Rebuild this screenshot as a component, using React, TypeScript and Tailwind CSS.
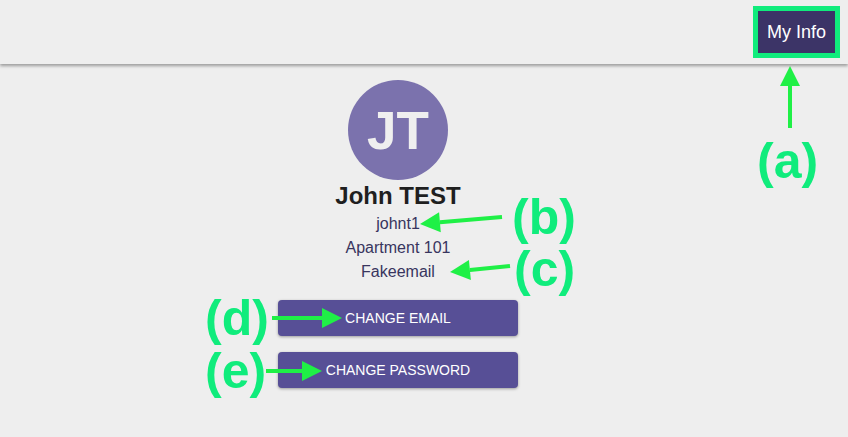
import { ReactNode } from "react";

const ARROW = "#1ff046";

const Label = ({ text, className }: { text: string; className: string }) => (
  <span className={`absolute z-20 text-[50px] font-bold leading-none text-[#10ec7c] ${className}`}>
    {text}
  </span>
);

// arrow drawn from (x1,y1) to head at (x2,y2)
const Arrow = ({ x1, y1, x2, y2 }: { x1: number; y1: number; x2: number; y2: number }) => {
  const a = Math.atan2(y2 - y1, x2 - x1);
  const len = 20;
  const w = 10;
  const bx = x2 - Math.cos(a) * len;
  const by = y2 - Math.sin(a) * len;
  const px = -Math.sin(a) * w;
  const py = Math.cos(a) * w;
  return (
    <g>
      <line x1={x1} y1={y1} x2={bx} y2={by} stroke={ARROW} strokeWidth={4} />
      <polygon points={`${x2},${y2} ${bx + px},${by + py} ${bx - px},${by - py}`} fill={ARROW} />
    </g>
  );
};

const ActionButton = ({ children }: { children: ReactNode }) => (
  <button className="mt-4 h-9 w-[240px] rounded bg-[#574f96] text-[14px] text-white shadow-[0_1px_3px_rgba(0,0,0,0.35)]">
    {children}
  </button>
);

export default function App() {
  return (
    <div
      className="relative h-[437px] w-[848px] overflow-hidden bg-[#eeeeee]"
      style={{ fontFamily: '"Liberation Sans", Arial, sans-serif' }}
    >
      <header className="relative z-10 flex h-16 items-start justify-end bg-[#eeeeee] pr-2 pt-[6px] shadow-[0_2px_3px_rgba(0,0,0,0.35)]">
        <div className="border-[5px] border-[#10ec7c]">
          <button className="flex h-[42px] w-[77px] items-center justify-center bg-[#3c3467] text-[18px] text-white">
            My Info
          </button>
        </div>
      </header>

      <main className="flex pl-[278px]">
        <div className="flex w-[240px] flex-col items-center">
          <div className="mt-4 flex h-[100px] w-[100px] items-center justify-center rounded-full bg-[#7b72ad]">
            <span className="text-[53px] font-bold leading-none text-[#efefef]">JT</span>
          </div>
          <h1 className="text-[24px] font-bold leading-8 text-[#1f1f1f]">John TEST</h1>
          <p className="text-base leading-6 text-[#38355e]">johnt1</p>
          <p className="text-base leading-6 text-[#38355e]">Apartment 101</p>
          <p className="text-base leading-6 text-[#38355e]">Fakeemail</p>
          <ActionButton>CHANGE EMAIL</ActionButton>
          <ActionButton>CHANGE PASSWORD</ActionButton>
        </div>
      </main>

      {/* annotations */}
      <svg className="pointer-events-none absolute left-0 top-0 z-20" width={848} height={437}>
        <Arrow x1={790} y1={128} x2={790} y2={66} />
        <Arrow x1={502} y1={217} x2={420} y2={224} />
        <Arrow x1={510} y1={266} x2={450} y2={272} />
        <Arrow x1={272} y1={318} x2={342} y2={318} />
        <Arrow x1={266} y1={371} x2={322} y2={371} />
      </svg>
      <Label text="(a)" className="left-[757px] top-[136px]" />
      <Label text="(b)" className="left-[512px] top-[192px]" />
      <Label text="(c)" className="left-[514px] top-[244px]" />
      <Label text="(d)" className="left-[205px] top-[293px]" />
      <Label text="(e)" className="left-[205px] top-[346px]" />
    </div>
  );
}
